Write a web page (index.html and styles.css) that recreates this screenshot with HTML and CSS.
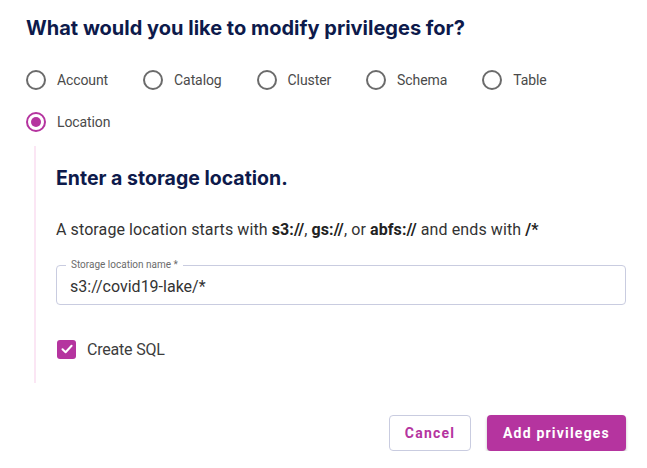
FILE: index.html
```html
<!DOCTYPE html>
<html>
<head>
<meta charset="utf-8">
<link rel="stylesheet" href="styles.css">
</head>
<body>
<div class="page">
  <h1 class="title">What would you like to modify privileges for?</h1>
  <div class="radios">
    <label class="radio"><span class="dot"></span><span class="rlabel">Account</span></label>
    <label class="radio"><span class="dot"></span><span class="rlabel">Catalog</span></label>
    <label class="radio"><span class="dot"></span><span class="rlabel">Cluster</span></label>
    <label class="radio"><span class="dot"></span><span class="rlabel">Schema</span></label>
    <label class="radio"><span class="dot"></span><span class="rlabel">Table</span></label>
    <label class="radio checked"><span class="dot"></span><span class="rlabel">Location</span></label>
  </div>
  <div class="section">
    <h2 class="subtitle">Enter a storage location.</h2>
    <p class="desc">A storage location starts with <b>s3://</b>, <b>gs://</b>, or <b>abfs://</b> and ends with <b>/*</b></p>
    <div class="field">
      <span class="flabel">Storage location name *</span>
      <span class="fvalue">s3://covid19-lake/*</span>
    </div>
    <div class="check">
      <span class="box"><svg width="14" height="14" viewBox="0 0 14 14"><path d="M2.5 7.2 L5.6 10.2 L11.6 3.8" fill="none" stroke="#fff" stroke-width="2" stroke-linecap="round" stroke-linejoin="round"/></svg></span>
      <span class="clabel">Create SQL</span>
    </div>
  </div>
  <div class="actions">
    <button class="btn btn-outline">Cancel</button>
    <button class="btn btn-primary">Add privileges</button>
  </div>
</div>
</body>
</html>
```
FILE: styles.css
```css
* { box-sizing: border-box; }
html, body { margin: 0; padding: 0; background: #fff; }
body { font-family: Roboto, "Liberation Sans", sans-serif; color: #3d3d3d; }
.page { padding: 16px 21px 0 26px; width: 647px; }
.title {
  margin: 0;
  font-family: Inter, "Liberation Sans", sans-serif;
  font-weight: 700;
  font-size: 20px;
  line-height: 24px;
  color: #0d1a4b;
}
.radios {
  display: flex;
  flex-wrap: wrap;
  column-gap: 35px;
  row-gap: 22px;
  margin-top: 30px;
}
.radio { display: flex; align-items: center; gap: 11px; height: 20px; }
.dot {
  width: 20px; height: 20px; border-radius: 50%;
  border: 2px solid #6b6b6b;
  display: flex; align-items: center; justify-content: center;
}
.radio.checked .dot { border-color: #b5349f; }
.radio.checked .dot::after {
  content: ""; width: 10px; height: 10px; border-radius: 50%; background: #b5349f;
}
.rlabel { font-size: 14px; color: #4a4a4a; letter-spacing: -0.1px; }
.radios .radio:nth-child(6) { flex-basis: 100%; }
.section {
  margin: 14px 0 0 8px;
  border-left: 2px solid #fbe6f4;
  padding: 20px 0 24px 20px;
}
.subtitle {
  margin: 0;
  font-family: Inter, "Liberation Sans", sans-serif;
  font-weight: 700;
  font-size: 19.5px;
  line-height: 24px;
  color: #0d1a4b;
}
.desc { margin: 30px 0 0; font-size: 16px; line-height: 20px; color: #333; letter-spacing: 0.1px; }
.desc b { font-weight: 700; color: #222; }
.field {
  position: relative;
  margin-top: 25px;
  height: 40px;
  border: 1px solid #c9cce0;
  border-radius: 4px;
  display: flex; align-items: center;
  padding: 0 13px;
}
.flabel {
  position: absolute; top: -7px; left: 9px;
  background: #fff; padding: 0 5px;
  font-size: 10px; line-height: 12px; color: #6b6b6b;
}
.fvalue { font-size: 16px; color: #333; padding-top: 3px; }
.check { display: flex; align-items: center; gap: 11px; margin-top: 34px; height: 20px; }
.box {
  width: 19px; height: 19px; border-radius: 3px; background: #b5349f;
  display: flex; align-items: center; justify-content: center; margin-left: 1px;
}
.clabel { font-size: 16px; color: #3d3d3d; letter-spacing: -0.2px; }
.actions { display: flex; justify-content: flex-end; gap: 16px; margin-top: 32px; }
.btn {
  height: 36px; border-radius: 4px;
  font-family: Roboto, "Liberation Sans", sans-serif;
  font-weight: 700; font-size: 14px; letter-spacing: 1.2px;
  cursor: pointer;
}
.btn-outline { width: 82px; background: #fff; color: #b5349f; border: 1px solid #c9cce0; }
.btn-primary { width: 139px; background: #b5349f; color: #fff; border: none; box-shadow: 0 2px 3px rgba(0,0,0,0.25); }
```
